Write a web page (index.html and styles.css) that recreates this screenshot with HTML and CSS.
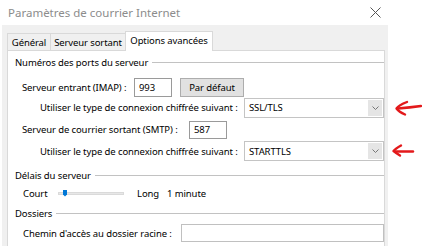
FILE: index.html
```html
<!DOCTYPE html>
<html lang="fr">
<head>
  <meta charset="UTF-8">
  <title>Paramètres de courrier Internet</title>
  <link rel="stylesheet" href="styles.css">
</head>
<body>

<div class="titlebar">
  <span class="title">Paramètres de courrier Internet</span>
  <svg class="close" width="11" height="11" viewBox="0 0 11 11">
    <path d="M0.5 0.5 L10.5 10.5 M10.5 0.5 L0.5 10.5" stroke="#555" stroke-width="1" fill="none"/>
  </svg>
</div>

<div class="dialog">
  <div class="tabs">
    <div class="tab t-general">Général</div>
    <div class="tab t-sortant">Serveur sortant</div>
    <div class="tab t-options active">Options avancées</div>
  </div>

  <div class="panel">
    <div class="group"><span>Numéros des ports du serveur</span></div>

    <div class="row r-imap">
      <label class="lbl w-imap">Serveur entrant (IMAP) :</label>
      <div class="field port">993</div>
      <div class="btn">Par défaut</div>
    </div>

    <div class="row r-combo">
      <label class="lbl w-combo">Utiliser le type de connexion chiffrée suivant :</label>
      <div class="combo">
        <span class="combo-val">SSL/TLS</span>
        <i class="drop"><svg width="7" height="4" viewBox="0 0 7 4"><path d="M0.5 0.5 L3.5 3.5 L6.5 0.5" stroke="#777" fill="none"/></svg></i>
      </div>
    </div>

    <div class="row r-smtp">
      <label class="lbl w-smtp">Serveur de courrier sortant (SMTP) :</label>
      <div class="field port">587</div>
    </div>

    <div class="row r-combo r-combo2">
      <label class="lbl w-combo">Utiliser le type de connexion chiffrée suivant :</label>
      <div class="combo">
        <span class="combo-val">STARTTLS</span>
        <i class="drop"><svg width="7" height="4" viewBox="0 0 7 4"><path d="M0.5 0.5 L3.5 3.5 L6.5 0.5" stroke="#777" fill="none"/></svg></i>
      </div>
    </div>

    <div class="group g-delay"><span>Délais du serveur</span></div>

    <div class="row r-slider">
      <span class="w-court">Court</span>
      <div class="track"><i class="thumb"></i></div>
      <span class="w-long">Long</span>
      <span>1 minute</span>
    </div>

    <div class="group g-folders"><span>Dossiers</span></div>

    <div class="row r-path">
      <label class="lbl w-path">Chemin d'accès au dossier racine :</label>
      <div class="field path"></div>
    </div>
  </div>
</div>

<!-- annotations dessinées à la main -->
<svg class="marks" width="34" height="70" viewBox="388 95 34 70">
  <g stroke="#e3191b" stroke-width="2.4" fill="none" stroke-linecap="round" stroke-linejoin="round">
    <path d="M407 102 Q399 105 396.5 108.5 Q399 112 405 114.5"/>
    <path d="M398 108.5 Q410 107.5 421 106"/>
    <path d="M401 145.5 Q395 149 393.5 151 Q396 153 400 155.5"/>
    <path d="M395 151.5 L413 151.5"/>
  </g>
</svg>

</body>
</html>
```

FILE: styles.css
```css
body {
  margin: 0;
  width: 422px;
  height: 246px;
  overflow: hidden;
  position: relative;
  background: #fff;
  font-family: 'Noto Sans', 'Open Sans', sans-serif;
  font-size: 9.5px;
  letter-spacing: -0.1px;
  color: #000;
  white-space: nowrap;
}
.titlebar {
  height: 25px;
  display: flex;
  align-items: center;
  justify-content: space-between;
  padding: 0 41px 0 8px;
}
.title {
  color: #8c8c8c;
  font-size: 11.5px;
  letter-spacing: 0;
}
.close {
  display: block;
}
.dialog {
  margin-left: 2px;
  width: 386px;
  height: 221px;
  box-sizing: border-box;
  padding: 6px 3px 0 5px;
  background: #f0f0f0;
}
.tabs {
  display: flex;
  align-items: flex-end;
  height: 20px;
  margin-bottom: -1px;
}
.tab {
  height: 18px;
  box-sizing: border-box;
  border: 1px solid #d9d9d9;
  border-bottom: none;
  margin-left: -1px;
  display: flex;
  align-items: center;
  justify-content: center;
  padding-bottom: 1px;
}
.t-general {
  width: 44px;
  margin-left: 0;
}
.t-sortant {
  width: 76px;
}
.t-options {
  width: 88px;
}
.tab.active {
  height: 20px;
  background: #fff;
  position: relative;
  z-index: 1;
  padding-bottom: 2px;
}
.panel {
  height: 200px;
  box-sizing: border-box;
  border: 1px solid #d9d9d9;
  background: #fff;
  padding: 0 0 0 7px;
}
.group {
  display: flex;
  align-items: center;
  height: 14px;
  margin-top: 4px;
}
.group::after {
  content: "";
  flex: 1;
  height: 1px;
  background: #c2c2c2;
  margin-left: 4px;
  margin-top: 1px;
}
.g-delay {
  margin-top: 7px;
}
.g-folders {
  margin-top: 4px;
}
.row {
  display: flex;
  align-items: center;
  padding-left: 7px;
}
.lbl {
  flex: none;
}
.w-imap { width: 112px; }
.w-smtp { width: 167px; }
.w-combo { width: 204px; }
.w-path { width: 158px; padding-left: 1px; }
.r-imap {
  margin-top: 8px;
  height: 20px;
}
.r-combo {
  padding-left: 25px;
  height: 21px;
}
.r-smtp {
  margin-top: 2px;
  height: 19px;
}
.r-combo2 {
  margin-top: 2px;
  height: 20px;
}
.field {
  box-sizing: border-box;
  border: 1px solid #9a9a9a;
  background: #fff;
  padding-left: 4px;
  display: flex;
  align-items: center;
}
.port {
  width: 38px;
  height: 19px;
}
.r-smtp .port {
  height: 18px;
}
.btn {
  width: 64px;
  height: 19px;
  box-sizing: border-box;
  margin-left: 8px;
  border: 1px solid #adadad;
  background: #e1e1e1;
  display: flex;
  align-items: center;
  justify-content: center;
}
.combo {
  flex: 1;
  height: 20px;
  box-sizing: border-box;
  border: 1px solid #c4c4c4;
  display: flex;
  align-items: center;
}
.combo-val {
  flex: 1;
  padding-left: 4px;
}
.drop {
  width: 14px;
  align-self: stretch;
  margin: 1px;
  background: #e5e5e5;
  display: flex;
  align-items: center;
  justify-content: center;
}
.r-slider {
  margin-top: 2px;
  height: 18px;
  padding-left: 8px;
}
.w-court {
  width: 35px;
}
.track {
  width: 66px;
  height: 3px;
  box-sizing: border-box;
  margin-right: 13px;
  background: #e7e7e7;
  border: 1px solid #dadada;
  position: relative;
}
.thumb {
  position: absolute;
  left: 4px;
  top: -3px;
  width: 4px;
  height: 7px;
  background: #0078d7;
  clip-path: polygon(0 0, 100% 0, 100% 70%, 50% 100%, 0 70%);
}
.w-long {
  width: 30px;
}
.r-path {
  margin-top: 4px;
  height: 18px;
}
.path {
  flex: 1;
  height: 18px;
  border-color: #c0c0c0;
}
.marks {
  position: absolute;
  left: 388px;
  top: 95px;
}
```
